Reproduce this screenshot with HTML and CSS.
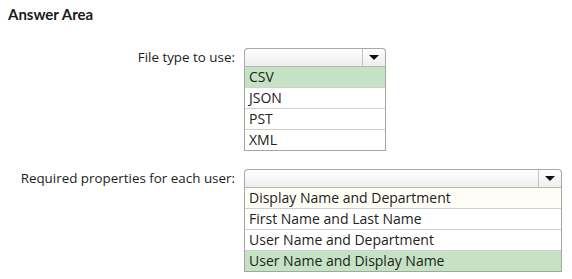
FILE: index.html
```html
<!DOCTYPE html>
<html lang="en">
<head>
  <meta charset="UTF-8" />
  <meta name="viewport" content="width=device-width, initial-scale=1.0" />
  <title>Answer Area</title>
  <link rel="stylesheet" href="styles.css">
</head>
<body>
  <div class="answer-area">
    <h2 class="title">Answer Area</h2>

    <div class="question">
      <div class="label">File type to use:</div>
      <div class="dropdown file-type">
        <div class="select">
          <span class="value"></span>
          <span class="arrow"></span>
        </div>
        <ul class="options">
          <li class="selected">CSV</li>
          <li>JSON</li>
          <li>PST</li>
          <li>XML</li>
        </ul>
      </div>
    </div>

    <div class="question">
      <div class="label">Required properties for each user:</div>
      <div class="dropdown properties">
        <div class="select">
          <span class="value"></span>
          <span class="arrow"></span>
        </div>
        <ul class="options">
          <li class="first">Display Name and Department</li>
          <li>First Name and Last Name</li>
          <li>User Name and Department</li>
          <li class="selected">User Name and Display Name</li>
        </ul>
      </div>
    </div>
  </div>
</body>
</html>
```

FILE: styles.css
```css
body {
  margin: 0;
  padding: 0;
  background: #fff;
  font-family: 'Open Sans', 'Segoe UI', sans-serif;
  color: #222;
}
.answer-area {
  padding: 5px 8px 0;
}
.title {
  margin: 0 0 25px;
  font-family: 'Lato', sans-serif;
  font-size: 15px;
  font-weight: 700;
  color: #1a1a1a;
}
.question {
  display: grid;
  grid-template-columns: 227px auto;
  column-gap: 9px;
  margin-bottom: 18px;
}
.question:last-child {
  margin-bottom: 0;
}
.label {
  text-align: right;
  font-size: 13.4px;
  line-height: 18px;
  color: #1c1c1c;
}
.dropdown.file-type {
  width: 142px;
}
.dropdown.properties {
  width: 318px;
}
.select {
  display: flex;
  height: 17px;
  border: 1px solid #a8a8a8;
  border-bottom-color: #b5b5b5;
  border-radius: 4px 4px 0 0;
  background: linear-gradient(#ffffff, #eeeeee);
}
.value {
  flex: 1;
}
.arrow {
  width: 22px;
  border-left: 1px solid #c4c4c4;
  display: flex;
  align-items: center;
  justify-content: center;
}
.arrow::after {
  content: "";
  border-left: 5px solid transparent;
  border-right: 5px solid transparent;
  border-top: 5px solid #111;
}
.options {
  list-style: none;
  margin: 0;
  padding: 0;
  border: 1px solid #9fa99c;
  border-top: none;
}
.options li {
  height: 20px;
  line-height: 20px;
  padding-left: 4px;
  font-size: 14px;
  border-top: 1px solid #cfcfcf;
  background: #fff;
}
.options li:first-child {
  border-top: none;
}
.options li.first {
  background: #fffef6;
}
.options li.selected {
  background: #c5e2c4;
}
```
